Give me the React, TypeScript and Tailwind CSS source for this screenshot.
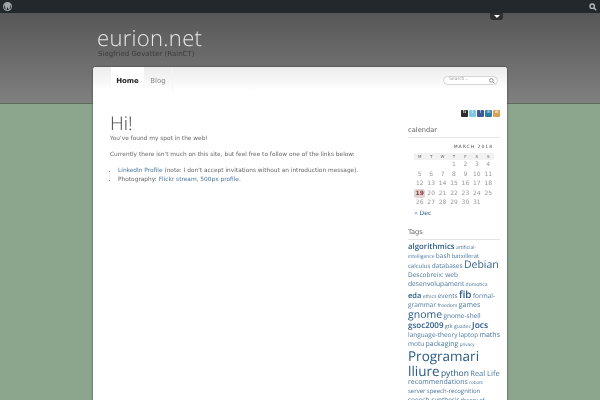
import React from 'react';

const calendarRows = [
  ['', '', '', '1', '2', '3', '4'],
  ['5', '6', '7', '8', '9', '10', '11'],
  ['12', '13', '14', '15', '16', '17', '18'],
  ['19', '20', '21', '22', '23', '24', '25'],
  ['26', '27', '28', '29', '30', '31', ''],
];

const tags: [string, string][] = [
  ['algorithmics', 'text-[7.800px] font-semibold text-[#2a5a85]'],
  ['artificial-intelligence', 'text-[5px] text-[#4a769c]'],
  ['bash', 'text-[6.500px] text-[#4a769c]'],
  ['batxillerat', 'text-[5.800px] text-[#4a769c]'],
  ['calculus', 'text-[6px] text-[#4a769c]'],
  ['databases', 'text-[6.500px] text-[#4a769c]'],
  ['Debian', 'text-[10.500px] leading-[9px] text-[#35658f]'],
  ['Descobreix: web', 'text-[6.500px] text-[#4a769c]'],
  ['desenvolupament', 'text-[6.700px] text-[#4a769c]'],
  ['domotica', 'text-[5px] text-[#4a769c]'],
  ['eda', 'text-[7.500px] font-semibold text-[#2a5a85]'],
  ['ethics', 'text-[5px] text-[#4a769c]'],
  ['events', 'text-[6.500px] text-[#4a769c]'],
  ['fib', 'text-[10px] leading-[11px] font-semibold text-[#2a5a85]'],
  ['formal-grammar', 'text-[6.500px] text-[#4a769c]'],
  ['freedom', 'text-[5px] text-[#4a769c]'],
  ['games', 'text-[7px] text-[#4a769c]'],
  ['gnome', 'text-[10.500px] leading-[11px] text-[#2a5a85]'],
  ['gnome-shell', 'text-[6.500px] text-[#4a769c]'],
  ['gsoc2009', 'text-[8px] leading-[10px] font-semibold text-[#2a5a85]'],
  ['gtk', 'text-[5.500px] text-[#4a769c]'],
  ['guadec', 'text-[5px] text-[#4a769c]'],
  ['Jocs', 'text-[8.500px] leading-[10px] font-semibold text-[#2a5a85]'],
  ['language-theory', 'text-[6.500px] text-[#4a769c]'],
  ['laptop', 'text-[6.500px] text-[#4a769c]'],
  ['maths', 'text-[7px] text-[#4a769c]'],
  ['motu', 'text-[6.500px] text-[#4a769c]'],
  ['packaging', 'text-[7px] text-[#4a769c]'],
  ['privacy', 'text-[4.500px] text-[#4a769c]'],
  ['Programari lliure', 'text-[13.500px] leading-[14px] text-[#2a5a85]'],
  ['python', 'text-[8.500px] text-[#2a5a85]'],
  ['Real Life', 'text-[7.500px] text-[#4a769c]'],
  ['recommendations', 'text-[7px] text-[#4a769c]'],
  ['robots', 'text-[4.500px] text-[#4a769c]'],
  ['server', 'text-[6px] text-[#4a769c]'],
  ['speech-recognition', 'text-[6px] text-[#4a769c]'],
  ['speech-synthesis', 'text-[6.500px] text-[#4a769c]'],
  ['theory-of-', 'text-[5.500px] text-[#4a769c]'],
];

const socials: [string, string][] = [
  ['bg-[#2b2b2b]', 'G'],
  ['bg-[#7fc8e8]', 't'],
  ['bg-[#3b5a98]', 'f'],
  ['bg-[#2d7fa8]', 'in'],
  ['bg-[#d8a255]', 'w'],
];

export default function App() {
  return (
    <div className="h-[400px] w-[600px] overflow-hidden bg-[#8ba68c] font-['DejaVu_Sans',sans-serif] [text-rendering:geometricPrecision] [will-change:transform]">
      <div className="flex h-[13px] items-center justify-between bg-[#23282d] pl-[3px] pr-[3px] shadow-[0_1px_0_#333]">
        <svg width="9" height="9" viewBox="0 0 20 20" className="fill-[#a0a5aa]">
          <path d="M10 0a10 10 0 1 0 0 20 10 10 0 0 0 0-20zM2 10c0-1.200.3-2.300.7-3.300l3.800 10.500A8 8 0 0 1 2 10zm8 8c-.8 0-1.500-.1-2.300-.3l2.400-7 2.500 6.800A8 8 0 0 1 10 18zm1.100-11.700l2.900 8.600.8-2.700c.3-1.100.6-1.900.6-2.600 0-1-.4-1.700-.7-2.200-.4-.7-.8-1.200-.8-1.800 0-.7.5-1.300 1.200-1.300h.1A8 8 0 0 0 3.200 5.800h.5c.8 0 2.100-.1 2.100-.1.5 0 .5.600.1.700l-.9.100 2.900 8.600 1.700-5.200-1.200-3.400-.8-.1c-.4 0-.4-.7.100-.7 0 0 1.300.1 2.100.1s2.100-.1 2.100-.1c.5 0 .5.600.1.700zM17 6c.6 1.100 1 2.500 1 4 0 3-1.600 5.500-4 6.900l2.400-7c.5-1.200.6-2.100.6-2.900z" />
        </svg>
        <svg width="8" height="8" viewBox="0 0 20 20" fill="none" stroke="#b4b9be" strokeWidth="3.500">
          <circle cx="8" cy="8" r="5.500" />
          <path d="M12 12l6 6" />
        </svg>
      </div>

      <div className="relative h-[91px] border-b border-[#5d6b5d] bg-gradient-to-b from-[#575757] to-[#808080]">
        <div className="absolute right-[97px] top-0 flex h-[7px] w-[13px] items-center justify-center rounded-b-[3px] bg-[#2e2e2e]">
          <div className="h-0 w-0 border-x-[3px] border-t-[3px] border-x-transparent border-t-white" />
        </div>
        <div className="pl-[97px] pt-[12px]">
          <h1 className="font-['Open_Sans',sans-serif] text-[22px] leading-[26px] font-light tracking-[0.3px] text-[#e6e6e6]">eurion.net</h1>
          <p className="ml-[1px] mt-[-2px] text-[7px] leading-[10px] text-[#3c3c3c]">Siegfried Gevatter (RainCT)</p>
        </div>
      </div>

      <div className="relative mx-auto mt-[-37px] h-[400px] w-[414px] rounded-t-[3px] bg-white shadow-[0_0_2px_#333]">
        <div className="flex h-[24px] items-stretch justify-between rounded-t-[3px] bg-gradient-to-b from-[#ececec] to-white pl-[18px] pr-[9px]">
          <nav className="flex text-[7px]">
            <span className="flex w-[33px] items-center justify-center bg-white pt-[4px] font-bold text-[#222]">Home</span>
            <span className="flex w-[29px] items-center justify-center border-r border-[#f4f4f4] pt-[4px] text-[#888]">Blog</span>
          </nav>
          <div className="mt-[9px] flex h-[9px] w-[55px] items-center justify-between rounded-full border border-[#d5d5d5] bg-white pl-[5px] pr-[2px]">
            <span className="text-[4.500px] leading-none text-[#999]">Search...</span>
            <svg width="6" height="6" viewBox="0 0 20 20" fill="none" stroke="#888" strokeWidth="3">
              <circle cx="8" cy="8" r="6" />
              <path d="M12 12l6 6" />
            </svg>
          </div>
        </div>

        <div className="flex justify-between pl-[17px] pr-[7px]">
          <main className="w-[270px] pt-[21px] text-[5.850px] leading-[9px] text-[#666]">
            <h2 className="font-['Open_Sans',sans-serif] text-[19px] leading-[22px] font-light text-[#444]">Hi!</h2>
            <p className="mt-[1px] whitespace-nowrap">You've found my spot in the web!</p>
            <p className="mt-[7px] whitespace-nowrap">Currently there isn't much on this site, but feel free to follow one of the links below:</p>
            <ul className="mt-[7px] list-disc whitespace-nowrap pl-[8px]">
              <li><span className="text-[#4a769c]">LinkedIn Profile</span> (note: I don't accept invitations without an introduction message).</li>
              <li>Photography: <span className="text-[#4a769c]">Flickr stream</span>, <span className="text-[#4a769c]">500px profile</span>.</li>
            </ul>
          </main>

          <aside className="w-[92px]">
            <div className="mt-[19px] flex justify-end gap-[1px]">
              {socials.map(([color, glyph]) => (
                <div key={glyph} className={`flex h-[7px] w-[7px] items-center justify-center rounded-[1px] text-[4.500px] leading-none text-white ${color}`}>{glyph}</div>
              ))}
            </div>
            <h3 className="mt-[8px] border-b border-[#e5e5e5] pb-[2px] text-[6.700px] leading-[10px] text-[#666]">calendar</h3>
            <div className="mt-[7px] pl-[6px] pr-[6px] text-[6px] text-[#999]">
              <div className="pr-[1px] text-right text-[4.500px] leading-[6px] tracking-[1px] text-[#555]">MARCH 2018</div>
              <table className="mt-[2px] w-full table-fixed border-collapse text-center">
                <thead>
                  <tr className="bg-[#f2f2f2] text-[4px] leading-[7px] text-[#666]">
                    {['M', 'T', 'W', 'T', 'F', 'S', 'S'].map((d, i) => <th key={i} className="font-normal">{d}</th>)}
                  </tr>
                </thead>
                <tbody>
                  {calendarRows.map((row, r) => (
                    <tr key={r} className="h-[9.500px] leading-[9px]">
                      {row.map((d, i) => (
                        <td key={i} className={d === '19' ? 'rounded-[2px] bg-[#e3d5d5] font-bold text-[#8a3a3a]' : ''}>{d}</td>
                      ))}
                    </tr>
                  ))}
                </tbody>
              </table>
              <div className="mt-[1px] text-[#35658f]">« Dec</div>
            </div>
            <h3 className="mt-[9px] border-b border-[#e5e5e5] pb-[2px] text-[6.700px] leading-[10px] text-[#666]">Tags</h3>
            <div className="mt-[3px] font-['Open_Sans',sans-serif] text-[5px] leading-[8px]">
              {tags.map(([name, cls]) => (
                <React.Fragment key={name}>
                  <span className={cls}>{name}</span>{' '}
                </React.Fragment>
              ))}
            </div>
          </aside>
        </div>
      </div>
    </div>
  );
}
